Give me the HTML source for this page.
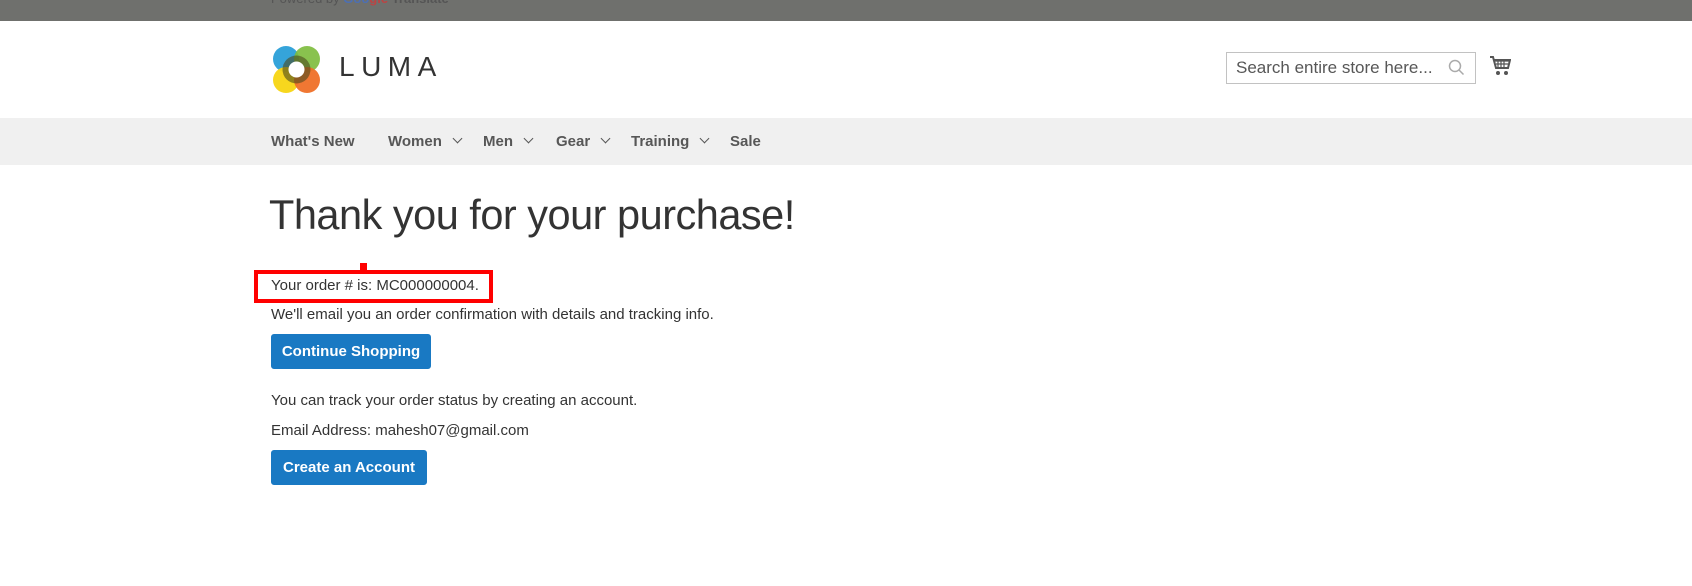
<!DOCTYPE html>
<html><head><meta charset="utf-8"><style>
*{margin:0;padding:0;box-sizing:border-box}
body{width:1692px;height:586px;background:#fff;font-family:"Liberation Sans",sans-serif;color:#333;position:relative;overflow:hidden}
.abs{position:absolute;white-space:nowrap}
.top{position:absolute;left:0;top:0;width:1692px;height:21px;background:#6f706d}
.nav{position:absolute;left:0;top:118px;width:1692px;height:47px;background:#f0f0f0}
.nav span{position:absolute;top:15px;font-weight:bold;font-size:15px;color:#575757}
.chev{display:inline-block;width:7px;height:7px;border-right:1.5px solid #575757;border-bottom:1.5px solid #575757;transform:rotate(45deg);margin-left:12px;position:relative;top:-4px}
.t{font-size:15px;color:#333}
.btn{position:absolute;background:#1979c3;border:1px solid #1979c3;border-radius:3px;color:#fff;font-weight:bold;font-size:15px;text-align:center;line-height:33px}
</style></head><body>
<div class="top"><span class="abs" style="left:271px;top:-9px;font-size:13px;color:#555">Powered by <b style="color:#4c6fb4">Goo</b><b style="color:#b44">gle</b> <b>Translate</b></span></div>

<svg class="abs" style="left:272px;top:45px" width="50" height="50" viewBox="0 0 50 50">
<circle cx="14" cy="14" r="13" fill="#1f9ad6" opacity=".9"/>
<circle cx="35" cy="14" r="13" fill="#7cbb3b" opacity=".9"/>
<circle cx="14" cy="35" r="13" fill="#f7d512" opacity=".95"/>
<circle cx="35" cy="35" r="13" fill="#ef7028" opacity=".95"/>
<circle cx="24.5" cy="24.5" r="14" fill="#4b4a1c" opacity=".6"/>
<circle cx="24.5" cy="24.5" r="8" fill="#fff"/>
</svg>
<span class="abs" style="left:339px;top:51px;font-size:28px;letter-spacing:6.5px;color:#333">LUMA</span>

<div class="abs" style="left:1226px;top:52px;width:250px;height:32px;border:1px solid #c2c2c2"></div>
<span class="abs" style="left:1236px;top:58px;font-size:17px;color:#575757">Search entire store here...</span>
<svg class="abs" style="left:1448px;top:59px" width="17" height="17" viewBox="0 0 17 17"><circle cx="7" cy="7" r="5.5" fill="none" stroke="#aaa" stroke-width="1.5"/><line x1="11" y1="11" x2="15.5" y2="15.5" stroke="#aaa" stroke-width="1.5"/></svg>
<svg class="abs" style="left:1489px;top:55px" width="22" height="22" viewBox="0 0 22 22"><path d="M1 2h3l3 11h12l2-8H5" fill="none" stroke="#555" stroke-width="2"/><path d="M6 6h14M7 9h12M9 5v8M12 5v8M15 5v8" stroke="#555" stroke-width="1.2"/><circle cx="9" cy="18" r="2" fill="#555"/><circle cx="17" cy="18" r="2" fill="#555"/></svg>

<div class="nav">
<span style="left:271px">What's New</span>
<span style="left:388px">Women<i class="chev"></i></span>
<span style="left:483px">Men<i class="chev"></i></span>
<span style="left:556px">Gear<i class="chev"></i></span>
<span style="left:631px">Training<i class="chev"></i></span>
<span style="left:730px">Sale</span>
</div>

<span class="abs" style="left:269px;top:191px;font-size:41.5px;font-weight:300;color:#333;letter-spacing:-.5px">Thank you for your purchase!</span>

<div class="abs" style="left:254px;top:270px;width:239px;height:33px;border:4px solid #f00"></div>
<div class="abs" style="left:360px;top:263px;width:7px;height:8px;background:#f00"></div>
<span class="abs t" style="left:271px;top:277px">Your order # is: MC000000004.</span>
<span class="abs t" style="left:271px;top:306px">We'll email you an order confirmation with details and tracking info.</span>
<div class="btn" style="left:271px;top:334px;width:160px;height:35px">Continue Shopping</div>
<span class="abs t" style="left:271px;top:392px">You can track your order status by creating an account.</span>
<span class="abs t" style="left:271px;top:422px">Email Address: mahesh07@gmail.com</span>
<div class="btn" style="left:271px;top:450px;width:156px;height:35px">Create an Account</div>
</body></html>
